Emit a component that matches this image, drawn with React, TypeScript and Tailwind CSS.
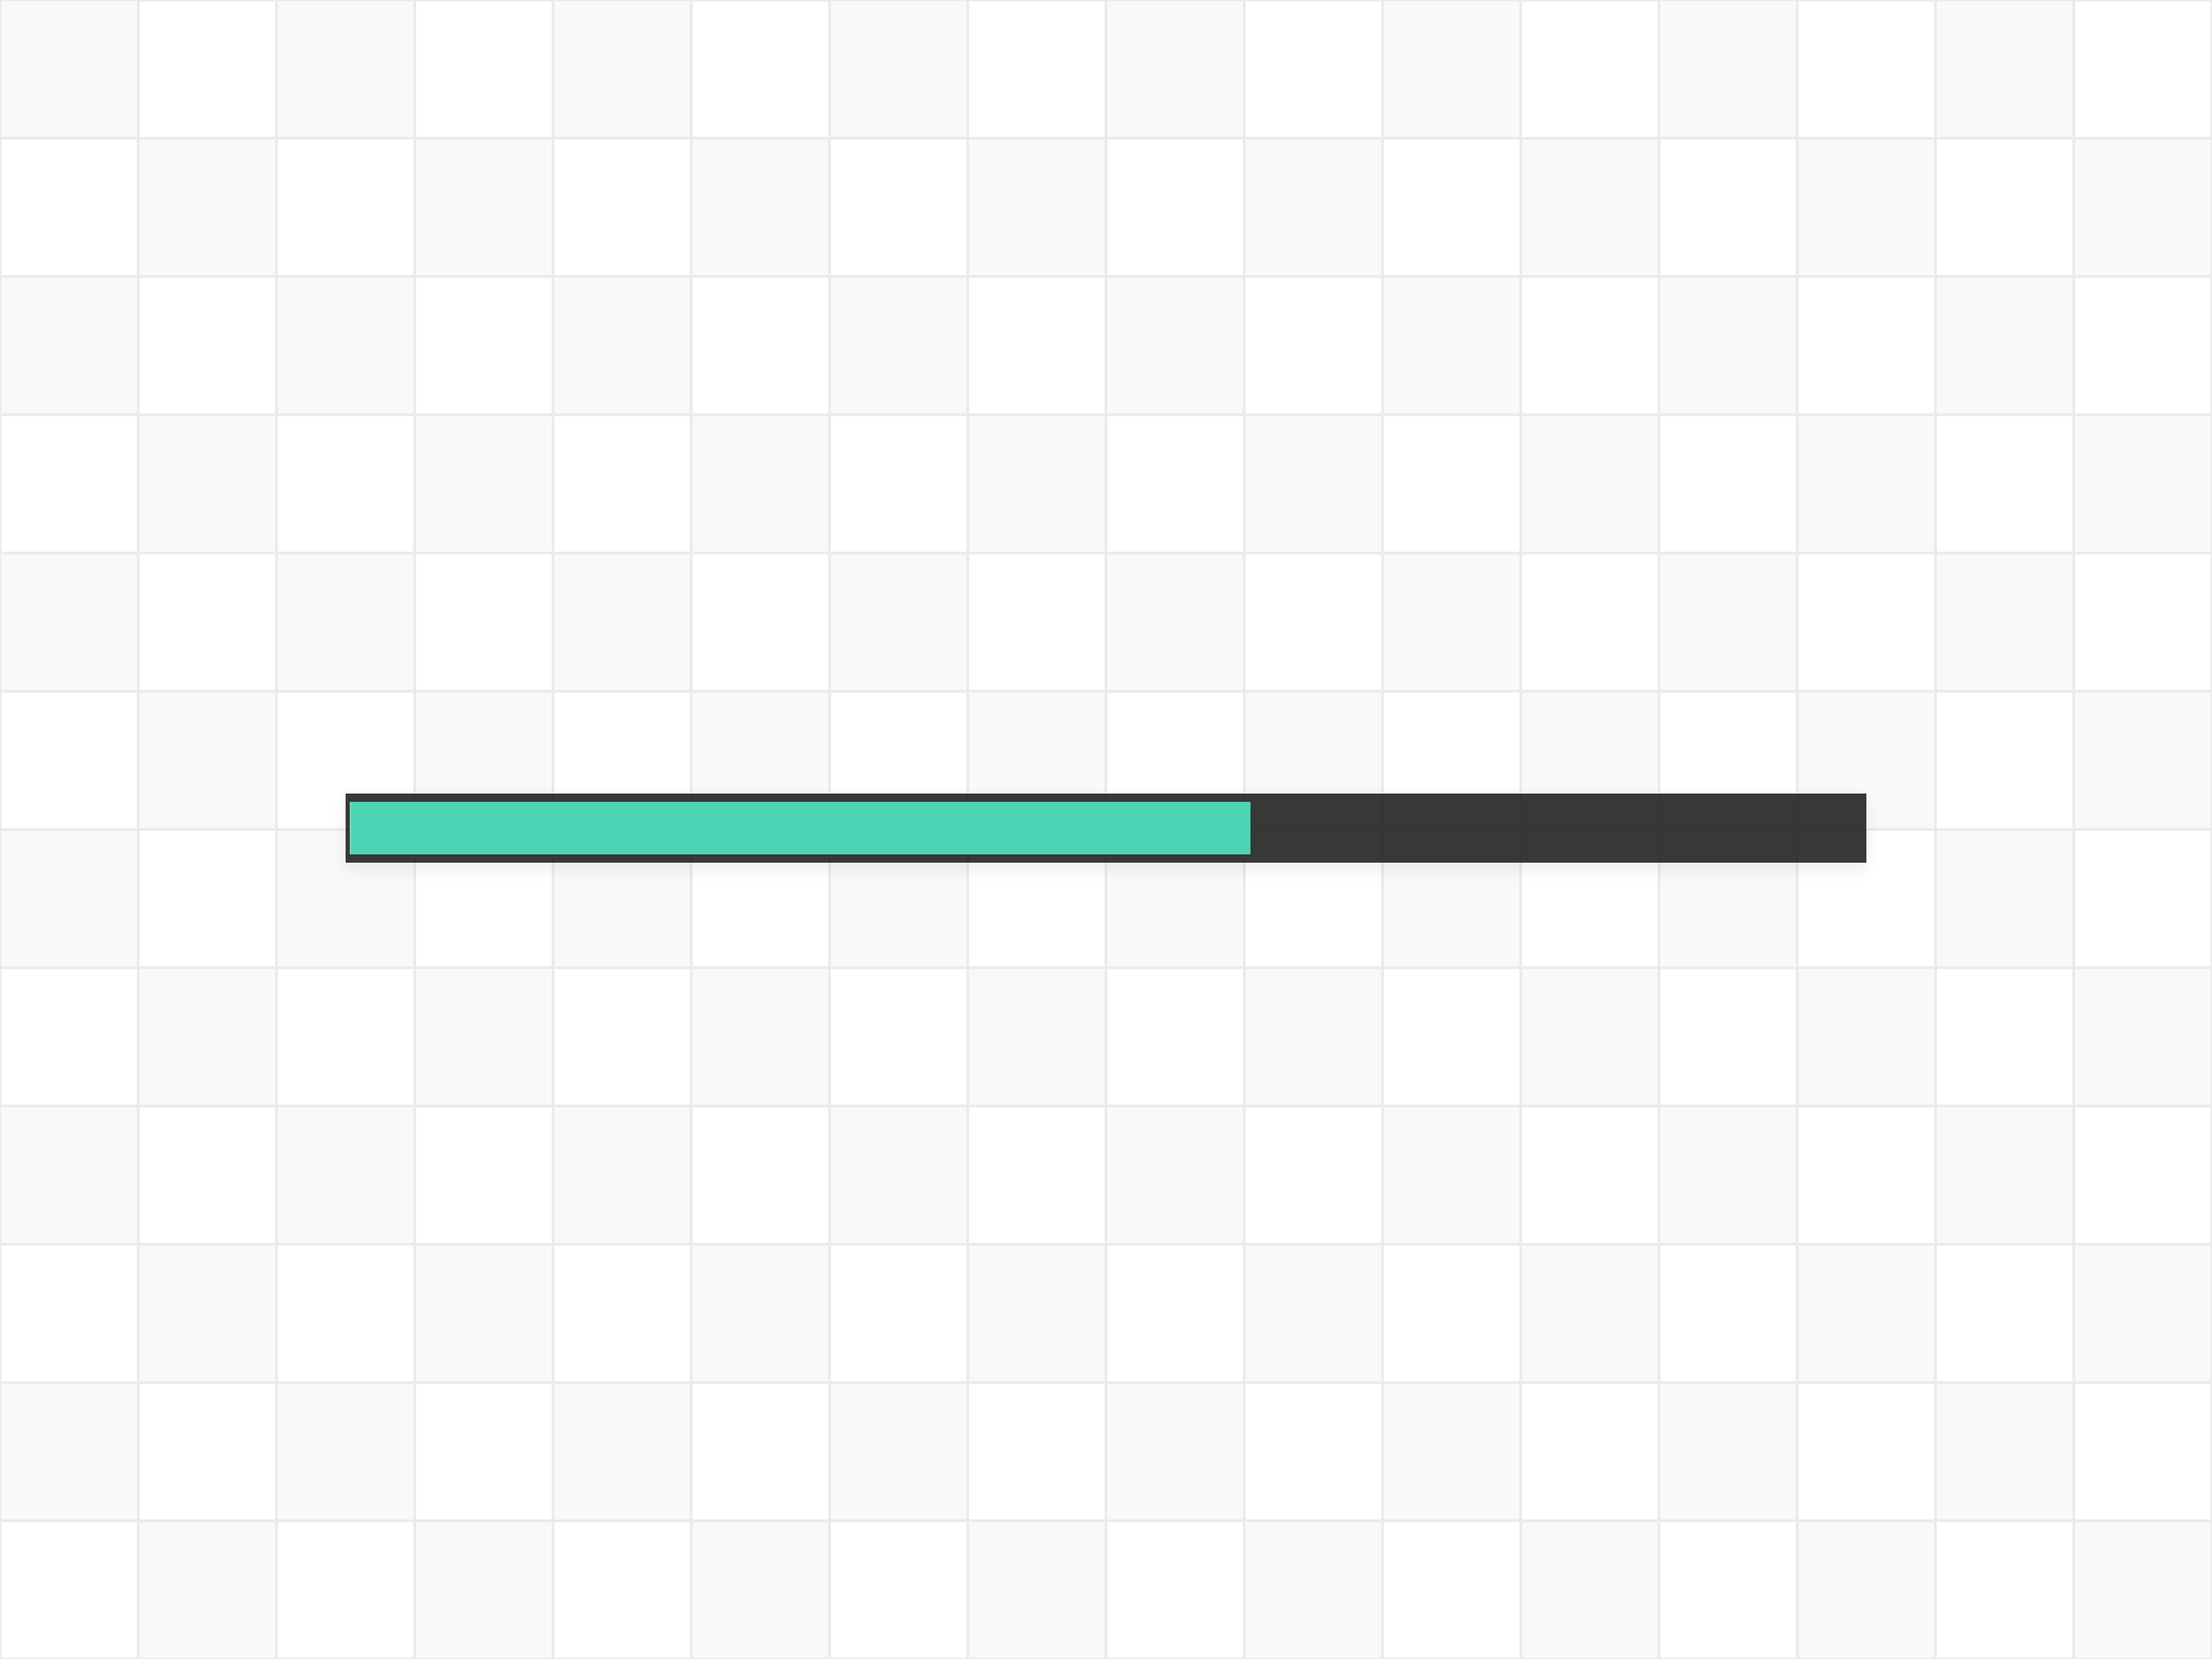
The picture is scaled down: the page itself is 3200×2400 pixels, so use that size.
const cols = 16;
const rows = 12;

const cells = Array.from({ length: rows * cols }, (_, i) => {
    const r = Math.floor(i / cols);
    const c = i % cols;
    return (r + c) % 2 === 0;
});

export default function App() {
    return (
        <div className="relative w-[3200px] h-[2400px] overflow-hidden bg-white">
            <div className="grid grid-cols-[repeat(16,200px)] grid-rows-[repeat(12,200px)]">
                {cells.map((gray, i) => (
                    <div
                        key={i}
                        className={
                            gray
                                ? 'box-border border-2 border-[#ebebeb] bg-[#f9f9f9]'
                                : 'box-border border-2 border-[#ebebeb] bg-white'
                        }
                    />
                ))}
            </div>

            {/* progress bar */}
            <div className="absolute left-[500px] top-[1148px] flex h-[100px] w-[2200px] items-center bg-[rgba(34,34,34,0.9)] pl-[6px] shadow-[0_10px_24px_rgba(0,0,0,0.07)]">
                <div className="h-[76px] w-[1303px] border-l-2 border-[#6fdcc2] bg-[#4dd4b4]" />
            </div>
        </div>
    );
}
